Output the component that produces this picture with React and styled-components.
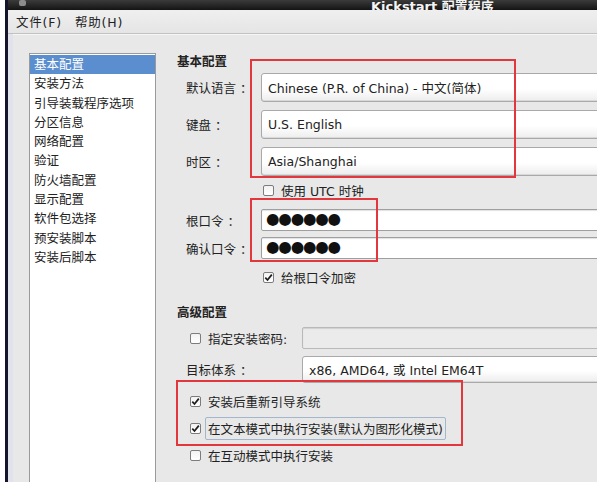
import React from "react";
import styled, { createGlobalStyle } from "styled-components";

const GlobalStyle = createGlobalStyle`
  html, body {
    margin: 0;
    padding: 0;
    background: #ffffff;
  }
  body {
    font-family: "DejaVu Sans", "Noto Sans CJK SC", sans-serif;
    font-size: 12.5px;
    color: #222;
  }
`;

const sections = [
  "基本配置",
  "安装方法",
  "引导装载程序选项",
  "分区信息",
  "网络配置",
  "验证",
  "防火墙配置",
  "显示配置",
  "软件包选择",
  "预安装脚本",
  "安装后脚本",
];

function CheckBox({ checked }) {
  return (
    <Box>
      {checked && (
        <svg width="9" height="9" viewBox="0 0 9 9">
          <path d="M1.3 4.6 L3.5 7 L7.8 1.6" fill="none" stroke="#1d1d1d" strokeWidth="1.7" />
        </svg>
      )}
    </Box>
  );
}

function App() {
  return (
    <Screen>
      <GlobalStyle />
      <Window>
        <TitleBar>
          <WinIcon />
          <Title>Kickstart 配置程序</Title>
        </TitleBar>
        <MenuBar>
          <MenuItem>文件(F)</MenuItem>
          <MenuItem>帮助(H)</MenuItem>
        </MenuBar>
        <Body>
          <SideList>
            {sections.map((s, i) => (
              <ListItem key={s} selected={i === 0}>{s}</ListItem>
            ))}
          </SideList>
          <Content>
            <SectionTitle>基本配置</SectionTitle>
            <FormGrid gap={8}>
              <Label>默认语言 ：</Label>
              <Combo>Chinese (P.R. of China) - 中文(简体)</Combo>
              <Label>键盘 ：</Label>
              <Combo>U.S. English</Combo>
              <Label>时区 ：</Label>
              <Combo>Asia/Shanghai</Combo>
            </FormGrid>
            <CheckRow indent={86} top={7}>
              <CheckBox />
              <span>使用 UTC 时钟</span>
            </CheckRow>
            <FormGrid gap={6} top={12} rowHeight={22}>
              <Label>根口令 ：</Label>
              <Entry><Dots>●●●●●●</Dots></Entry>
              <Label>确认口令 ：</Label>
              <Entry><Dots>●●●●●●</Dots></Entry>
            </FormGrid>
            <CheckRow indent={86} top={11}>
              <CheckBox checked />
              <span>给根口令加密</span>
            </CheckRow>

            <SectionTitle top={21}>高级配置</SectionTitle>
            <AdvRow top={6} height={22}>
              <CheckLabel>
                <CheckBox />
                <span>指定安装密码:</span>
              </CheckLabel>
              <Entry disabled />
            </AdvRow>
            <AdvRow top={7} height={27}>
              <AdvLabel>目标体系 ：</AdvLabel>
              <Combo>x86, AMD64, 或 Intel EM64T</Combo>
            </AdvRow>
            <CheckList>
              <CheckRow indent={13}>
                <CheckBox checked />
                <span>安装后重新引导系统</span>
              </CheckRow>
              <CheckRow indent={13}>
                <CheckBox checked />
                <Focused>在文本模式中执行安装(默认为图形化模式)</Focused>
              </CheckRow>
              <CheckRow indent={13}>
                <CheckBox />
                <span>在互动模式中执行安装</span>
              </CheckRow>
            </CheckList>
          </Content>
        </Body>
      </Window>

      <Mark style={{ left: 250, top: 59, width: 266, height: 119 }} />
      <Mark style={{ left: 250, top: 198, width: 128, height: 64 }} />
      <Mark style={{ left: 176, top: 380, width: 287, height: 66 }} />
    </Screen>
  );
}

export default App;

const Screen = styled.div`
  position: relative;
  width: 597px;
  height: 489px;
  overflow: hidden;
  background: #fff;
`;

const Window = styled.div`
  margin-left: 5px;
  height: 482px;
  border-left: 3px solid #14142a;
  background: #e8e8e8;
  display: flex;
  flex-direction: column;
  overflow: hidden;
`;

const TitleBar = styled.div`
  height: 10px;
  flex: none;
  background: linear-gradient(#3b3b3b, #141414);
  display: flex;
  align-items: flex-end;
  overflow: hidden;
  position: relative;
`;

const WinIcon = styled.div`
  width: 7px;
  height: 6px;
  margin-left: 11px;
  margin-bottom: 4px;
  background: #8c8c8c;
  border-radius: 2px;
`;

const Title = styled.div`
  margin-left: 345px;
  margin-bottom: -3px;
  color: #f4f4f4;
  font-weight: bold;
  font-size: 13px;
  line-height: 13px;
  white-space: nowrap;
`;

const MenuBar = styled.div`
  height: 23px;
  flex: none;
  display: flex;
  align-items: center;
  padding-left: 8px;
  background: linear-gradient(#efefef, #e5e5e5);
  border-bottom: 1px solid #c2c2c2;
  box-shadow: 0 1px 0 #f6f6f6;
`;

const MenuItem = styled.div`
  margin-right: 13px;
  letter-spacing: 0.8px;
`;

const Body = styled.div`
  flex: 1;
  display: flex;
  border-left: 5px solid #e2e2ec;
  padding: 19px 0 0 16px;
  min-height: 0;
`;

const SideList = styled.div`
  width: 127px;
  flex: none;
  box-sizing: border-box;
  background: #fff;
  border: 1px solid #9a9a9a;
  border-bottom: none;
  padding-top: 1px;
`;

const ListItem = styled.div`
  height: 19.3px;
  line-height: 19.3px;
  padding-left: 4px;
  white-space: nowrap;
  background: ${(p) => (p.selected ? "#5b8ecf" : "transparent")};
  color: ${(p) => (p.selected ? "#fff" : "#222")};
`;

const Content = styled.div`
  flex: 1;
  padding: 1px 0 0 21px;
  display: flex;
  flex-direction: column;
  min-width: 0;
`;

const SectionTitle = styled.div`
  font-weight: bold;
  font-size: 12.5px;
  height: 16px;
  line-height: 16px;
  margin-top: ${(p) => p.top || 0}px;
`;

const FormGrid = styled.div`
  display: grid;
  grid-template-columns: 75px 1fr;
  grid-auto-rows: ${(p) => p.rowHeight || 29}px;
  row-gap: ${(p) => p.gap}px;
  padding-left: 9px;
  margin-top: ${(p) => p.top || 3}px;
  margin-right: -14px;
`;

const Label = styled.div`
  display: flex;
  align-items: center;
  white-space: nowrap;
`;

const Combo = styled.div`
  display: flex;
  align-items: center;
  box-sizing: border-box;
  padding-left: 6px;
  border: 1px solid #a9a9a9;
  border-radius: 3px;
  background: linear-gradient(#ffffff 0%, #ffffff 55%, #ededed 100%);
  box-shadow: inset 0 -1px 0 #d9d9d9;
  white-space: nowrap;
  overflow: hidden;
  min-width: 0;
`;

const Entry = styled.div`
  display: flex;
  align-items: center;
  box-sizing: border-box;
  padding-left: 4px;
  border: 1px solid ${(p) => (p.disabled ? "#b9b9b9" : "#9f9f9f")};
  border-radius: 2px;
  background: ${(p) => (p.disabled ? "#ebebeb" : "#fff")};
  box-shadow: inset 0 1px 1px rgba(0, 0, 0, 0.12);
  min-width: 0;
  overflow: hidden;
`;

const Dots = styled.span`
  font-size: 15.5px;
  letter-spacing: -1.2px;
  color: #111;
  line-height: 1;
`;

const Box = styled.span`
  width: 11px;
  height: 11px;
  flex: none;
  box-sizing: border-box;
  border: 1px solid #7c7c7c;
  border-radius: 2px;
  background: linear-gradient(#f2f2f2, #ffffff);
  display: flex;
  align-items: center;
  justify-content: center;
`;

const CheckRow = styled.div`
  display: flex;
  align-items: center;
  gap: 7px;
  height: ${(p) => p.height || 14}px;
  padding-left: ${(p) => p.indent}px;
  margin-top: ${(p) => p.top || 0}px;
  white-space: nowrap;
`;

const CheckLabel = styled.div`
  display: flex;
  align-items: center;
  gap: 7px;
  padding-left: 13px;
  white-space: nowrap;
`;

const AdvRow = styled.div`
  display: grid;
  grid-template-columns: 125px 1fr;
  height: ${(p) => p.height}px;
  margin-top: ${(p) => p.top}px;
  margin-right: -14px;
`;

const AdvLabel = styled.div`
  display: flex;
  align-items: center;
  padding-left: 9px;
  white-space: nowrap;
`;

const CheckList = styled.div`
  display: flex;
  flex-direction: column;
  gap: 13px;
  margin-top: 11px;
`;

const Focused = styled.span`
  border: 1px solid #a3b6cc;
  border-radius: 2px;
  padding: 1px 2px;
  margin-left: -3px;
`;

const Mark = styled.div`
  position: absolute;
  box-sizing: border-box;
  border: 2px solid #e3373e;
  pointer-events: none;
`;
